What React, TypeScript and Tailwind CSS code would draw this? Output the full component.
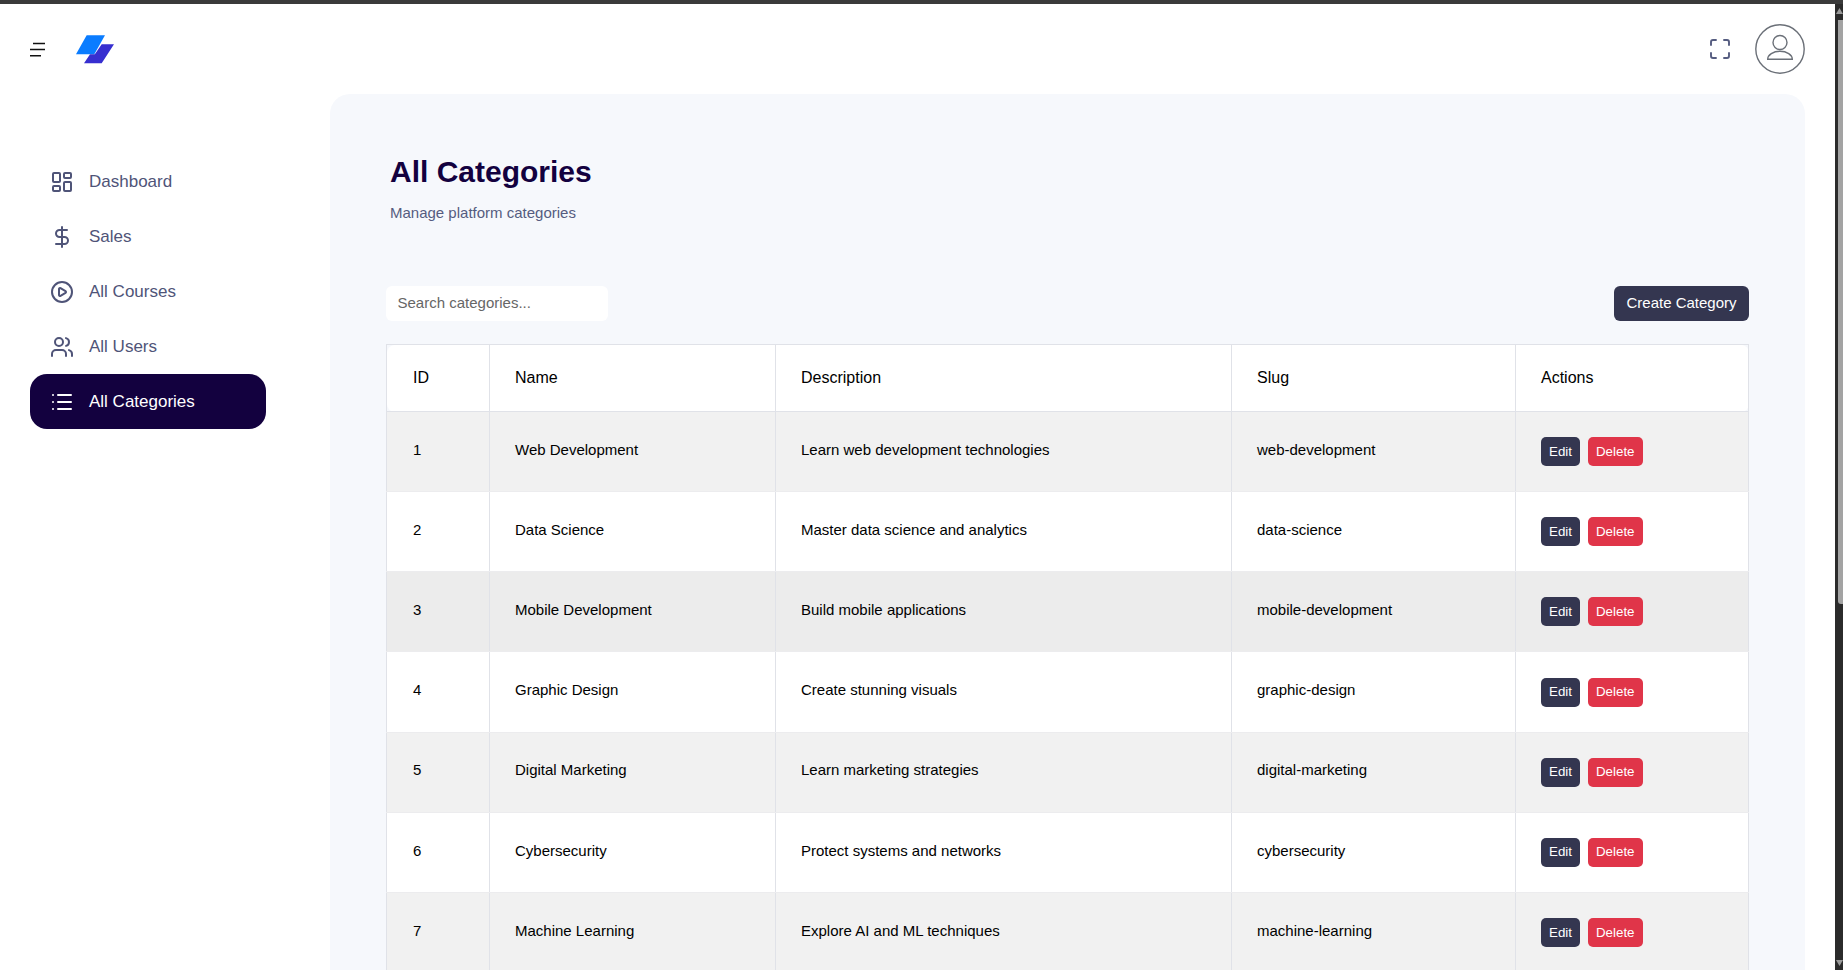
import { CirclePlay, DollarSign, LayoutDashboard, List, Maximize, Users } from "lucide-react";

const navItems = [
  { label: "Dashboard", icon: LayoutDashboard },
  { label: "Sales", icon: DollarSign },
  { label: "All Courses", icon: CirclePlay },
  { label: "All Users", icon: Users },
  { label: "All Categories", icon: List, active: true },
];

const categories = [
  { id: 1, name: "Web Development", description: "Learn web development technologies", slug: "web-development" },
  { id: 2, name: "Data Science", description: "Master data science and analytics", slug: "data-science" },
  { id: 3, name: "Mobile Development", description: "Build mobile applications", slug: "mobile-development" },
  { id: 4, name: "Graphic Design", description: "Create stunning visuals", slug: "graphic-design" },
  { id: 5, name: "Digital Marketing", description: "Learn marketing strategies", slug: "digital-marketing" },
  { id: 6, name: "Cybersecurity", description: "Protect systems and networks", slug: "cybersecurity" },
  { id: 7, name: "Machine Learning", description: "Explore AI and ML techniques", slug: "machine-learning" },
];

function Logo() {
  return (
    <svg width="38" height="29" viewBox="0 0 38 29" className="ml-[31px]">
      <polygon points="10.7,0.3 29,0.3 18.3,19.3 0,19.3" fill="#0a7cff" />
      <polygon points="25.7,9.3 38,9.3 25.7,28.3 8,28.3 14,19.3 18.8,19.3" fill="#372fd0" />
    </svg>
  );
}

function Avatar() {
  return (
    <svg width="50" height="50" viewBox="0 0 50 50" fill="none" stroke="#6b7078" strokeWidth="1.4">
      <circle cx="25" cy="25" r="24.2" />
      <circle cx="25" cy="18.5" r="7" />
      <path d="M12.7 35.3a12.3 8 0 0 1 24.6 0z" />
    </svg>
  );
}

function Scrollbar() {
  return (
    <div className="w-2 shrink-0 bg-[#2b2b2b] flex flex-col items-end">
      <svg width="7" height="6" viewBox="0 0 7 6" className="mt-[4px] shrink-0">
        <polygon points="3.5,0 7,6 0,6" fill="#9a9a9a" />
      </svg>
      <div className="w-[5px] h-[584px] mt-[6px] bg-[#a3a3a3] rounded-bl-[3px]" />
      <svg width="7" height="6" viewBox="0 0 7 6" className="mt-auto mb-[4px] shrink-0">
        <polygon points="0,0 7,0 3.5,6" fill="#9a9a9a" />
      </svg>
    </div>
  );
}

export default function App() {
  return (
    <div className="h-screen overflow-hidden flex flex-col bg-white font-['Liberation_Sans',Arial,sans-serif]">
      <div className="h-[4px] shrink-0 bg-[#3a3a3a]" />
      <div className="flex flex-1 min-h-0">
        <div className="flex-1 min-w-0 flex flex-col">
          {/* Header */}
          <header className="h-[90px] shrink-0 flex items-center justify-between pl-[30px] pr-[30px]">
            <div className="flex items-center">
              <svg width="15" height="15" viewBox="0 0 15 15" stroke="#111" strokeWidth="1.5">
                <path d="M3 1.5h12M0 7.5h15M0 13.8h11" />
              </svg>
              <Logo />
            </div>
            <div className="flex items-center gap-[23px] -mt-[1px]">
              <Maximize size={24} strokeWidth={1.9} className="text-[#555c80]" />
              <Avatar />
            </div>
          </header>

          <div className="flex flex-1 min-h-0">
            {/* Sidebar */}
            <aside className="w-[330px] shrink-0 pt-[60px] pl-[30px]">
              <nav className="w-[236px] flex flex-col">
                {navItems.map((item) => (
                  <a
                    key={item.label}
                    href="#"
                    className={`h-[55px] flex items-center gap-[15px] pl-[20px] rounded-[17px] text-[17px] ${
                      item.active ? "bg-[#13013f] text-white" : "text-[#4f5478]"
                    }`}
                  >
                    <item.icon size={24} strokeWidth={2} />
                    <span>{item.label}</span>
                  </a>
                ))}
              </nav>
            </aside>

            {/* Content */}
            <main className="flex-1 min-w-0 mr-[30px] bg-[#f6f8fc] rounded-t-[20px] pt-[60px] px-[56px]">
              <h1 className="ml-[4px] text-[30px] leading-[36px] font-bold text-[#13013f]">All Categories</h1>
              <p className="ml-[4px] mt-[13px] text-[15px] leading-5 text-[#555c80]">Manage platform categories</p>

              <div className="mt-[63px] mb-[23px] flex items-center justify-between">
                <input
                  placeholder="Search categories..."
                  className="w-[222px] h-[35px] pb-[2px] px-[11.5px] bg-white rounded-md text-[15px] outline-none placeholder:text-[#666]"
                />
                <button className="h-[35px] w-[135px] bg-[#343650] text-white text-[15px] rounded-md">Create Category</button>
              </div>

              <table className="w-[1362px] table-fixed border-collapse text-black">
                <colgroup>
                  <col className="w-[103px]" />
                  <col className="w-[286px]" />
                  <col className="w-[456px]" />
                  <col className="w-[284px]" />
                  <col className="w-[233px]" />
                </colgroup>
                <thead>
                  <tr className="h-[67px] text-base text-left">
                    <th className="font-normal bg-white border border-[#e0e2e8] pl-[26px] pb-[1px] rounded-tl-lg rounded-bl-lg">ID</th>
                    <th className="font-normal bg-white border border-[#e0e2e8] pl-[25px] pb-[1px]">Name</th>
                    <th className="font-normal bg-white border border-[#e0e2e8] pl-[25px] pb-[1px]">Description</th>
                    <th className="font-normal bg-white border border-[#e0e2e8] pl-[25px] pb-[1px]">Slug</th>
                    <th className="font-normal bg-white border border-[#e0e2e8] pl-[25px] pb-[1px] rounded-tr-lg rounded-br-lg">Actions</th>
                  </tr>
                </thead>
                <tbody>
                  {categories.map((cat) => (
                    <tr
                      key={cat.id}
                      className={`h-[80.17px] text-[15px] ${
                        cat.id === 3 ? "bg-[#ececec]" : cat.id % 2 === 1 ? "bg-[#f1f1f1]" : "bg-white"
                      }`}
                    >
                      <td className="border-x border-x-[#e0e2e8] border-y border-y-[#ececee] pl-[26px] pb-[3px]">{cat.id}</td>
                      <td className="border-x border-x-[#e0e2e8] border-y border-y-[#ececee] pl-[25px] pb-[3px]">{cat.name}</td>
                      <td className="border-x border-x-[#e0e2e8] border-y border-y-[#ececee] pl-[25px] pb-[3px]">{cat.description}</td>
                      <td className="border-x border-x-[#e0e2e8] border-y border-y-[#ececee] pl-[25px] pb-[3px]">{cat.slug}</td>
                      <td className="border-x border-x-[#e0e2e8] border-y border-y-[#ececee] pl-[25px]">
                        <div className="flex gap-2">
                          <button className="h-[29px] px-2 bg-[#343650] text-white text-[13.33px] rounded-[5px]">Edit</button>
                          <button className="h-[29px] px-2 bg-[#e03549] text-white text-[13.33px] rounded-[5px]">Delete</button>
                        </div>
                      </td>
                    </tr>
                  ))}
                </tbody>
              </table>
            </main>
          </div>
        </div>
        <Scrollbar />
      </div>
    </div>
  );
}
